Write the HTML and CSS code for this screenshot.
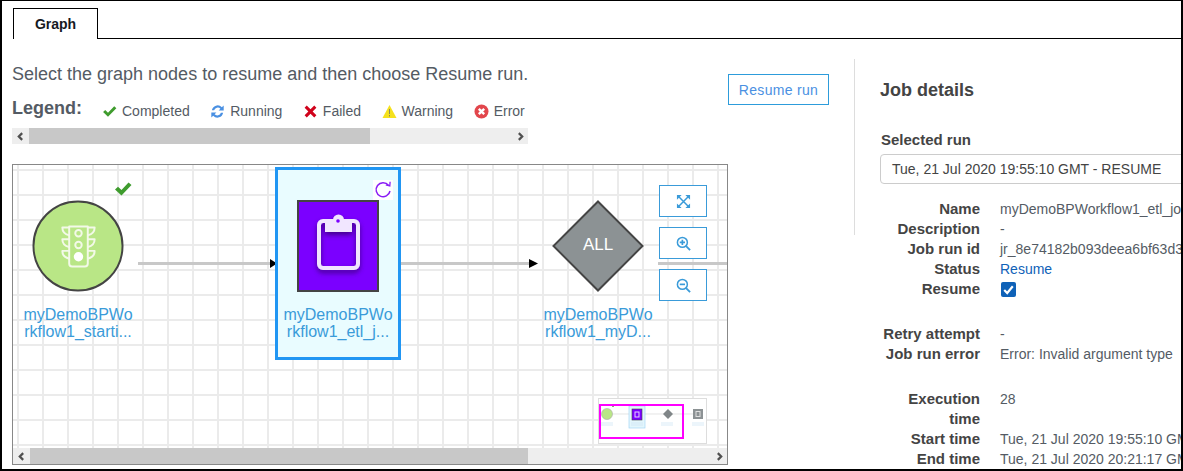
FILE: index.html
```html
<!DOCTYPE html>
<html lang="en">
<head>
<meta charset="utf-8">
<title>Graph</title>
<link rel="stylesheet" href="styles.css">
</head>
<body>
<div class="frame">
  <div class="tabs">
    <div class="tab">Graph</div>
    <div class="tab-rest"></div>
  </div>
  <div class="main">
    <section class="left">
      <div class="head">
        <div class="head-text">
          <p class="intro">Select the graph nodes to resume and then choose Resume run.</p>
          <div class="legend">
            <strong class="legend-title">Legend:</strong>
            <span class="legend-item">
              <svg class="legend-icon" viewBox="0 0 14 14"><path d="M1 7.500l2-2 2.600 2.600L11.400 2l2 2-7.800 8z" fill="#3f9c2e"/></svg>Completed</span>
            <span class="legend-item">
              <svg class="legend-icon" viewBox="0 0 16 16"><path d="M2 6.600A6.200 6.200 0 0 1 12.600 3.400L14.600 1.500V7H9.200l1.900-2A4 4 0 0 0 4.400 6.600z" fill="#4a90e2"/><path d="M14 9.400A6.200 6.200 0 0 1 3.400 12.600L1.400 14.500V9h5.400l-1.900 2a4 4 0 0 0 6.700-1.600z" fill="#4a90e2"/></svg>Running</span>
            <span class="legend-item">
              <svg class="legend-icon" viewBox="0 0 14 14"><path d="M1.500 3.500l2-2L7 5l3.500-3.500 2 2L9 7l3.500 3.500-2 2L7 9l-3.500 3.500-2-2L5 7z" fill="#d0021b"/></svg>Failed</span>
            <span class="legend-item">
              <svg class="legend-icon" viewBox="0 0 15 15"><path d="M7.500 1L14.500 14H.5z" fill="#f5e11d"/><path d="M7 5h1v5H7zM7 11h1v1.500H7z" fill="#8c8c5a"/></svg>Warning</span>
            <span class="legend-item">
              <svg class="legend-icon" viewBox="0 0 15 15"><circle cx="7.500" cy="7.500" r="7" fill="#e2464c"/><path d="M4.800 4.800l5.400 5.400M10.200 4.800l-5.400 5.400" stroke="#fff" stroke-width="2.400"/></svg>Error</span>
          </div>
          <div class="hscroll">
            <span class="hscroll-btn"><svg viewBox="0 0 8 8"><path d="M5.500 1L2.500 4l3 3" fill="none" stroke="#505050" stroke-width="2"/></svg></span>
            <span class="hscroll-track"><span class="hscroll-thumb thumb-legend"></span></span>
            <span class="hscroll-btn"><svg viewBox="0 0 8 8"><path d="M2.500 1l3 3-3 3" fill="none" stroke="#505050" stroke-width="2"/></svg></span>
          </div>
        </div>
        <button class="resume-btn" type="button">Resume run</button>
      </div>

      <div class="canvas">
        <div class="viewport">
          <svg class="edges" viewBox="0 0 714 283">
            <rect x="125" y="97" width="133" height="3" fill="#c8c8c8"/>
            <path d="M257 94l7 4.500-7 4.500z" fill="#000"/>
            <rect x="388" y="97" width="130" height="3" fill="#c8c8c8"/>
            <path d="M516 94l9 4.500-9 4.500z" fill="#000"/>
            <rect x="645" y="97" width="69" height="3" fill="#c8c8c8"/>
          </svg>

          <svg class="start-check" viewBox="0 0 18 16"><path d="M1 8.500l3-2.800 3.500 3.300L14.500 1.500 17.500 4 7.500 14.500z" fill="#3f9c2e"/></svg>
          <svg class="start-node" viewBox="0 0 94 94">
            <circle cx="47" cy="47" r="45.500" fill="#b9e686" stroke="#444" stroke-width="2"/>
            <g fill="none" stroke="#f3f9e8" stroke-width="2" stroke-linejoin="round">
              <path d="M38 27h19v38a3 3 0 0 1-3 3H41a3 3 0 0 1-3-3z"/>
              <path d="M38 28H31c0 5 3 7 7 8M57 28h7c0 5-3 7-7 8M38 40H31c0 5 3 7 7 8M57 40h7c0 5-3 7-7 8M38 52H31c0 5 3 7 7 8M57 52h7c0 5-3 7-7 8"/>
              <circle cx="47.500" cy="34" r="3.300"/>
              <circle cx="47.500" cy="46" r="3.300"/>
            </g>
            <circle cx="47.500" cy="58" r="4.800" fill="#fff"/>
          </svg>
          <a class="node-label label-start">myDemoBPWo<br>rkflow1_starti...</a>

          <div class="selected-node">
            <svg class="spin" viewBox="0 0 20 20"><rect width="20" height="20" fill="#fff"/><path d="M15.500 5.200A7 7 0 1 0 17 11" fill="none" stroke="#8a1cf5" stroke-width="1.500"/><path d="M12.800 4.800l4 1.200.3-4.200" fill="none" stroke="#8a1cf5" stroke-width="1.300"/></svg>
            <svg class="job-icon" viewBox="0 0 82 92">
              <defs><filter id="sh" x="-30%" y="-30%" width="160%" height="170%"><feDropShadow dx="0" dy="3" stdDeviation="2.500" flood-color="#3a0078" flood-opacity=".85"/></filter></defs>
              <rect x="1" y="1" width="80" height="90" fill="#7b00ff" stroke="#444" stroke-width="2"/>
              <g filter="url(#sh)">
                <rect x="22" y="21" width="39" height="47" rx="4" fill="none" stroke="#f1e6ff" stroke-width="4"/>
                <path d="M28 20h8a5.500 5.500 0 0 1 11 0h8v12H28z" fill="#f1e6ff"/>
              </g>
              <circle cx="41" cy="21" r="1.800" fill="#7b00ff"/>
            </svg>
            <a class="node-label label-job">myDemoBPWo<br>rkflow1_etl_j...</a>
          </div>

          <div class="all-node">
            <svg viewBox="0 0 94 94"><path d="M47 1.500L92.500 47 47 92.500 1.500 47z" fill="#8c9294" stroke="#444" stroke-width="2"/></svg>
            <span class="all-text">ALL</span>
          </div>
          <a class="node-label label-all">myDemoBPWo<br>rkflow1_myD...</a>

          <div class="controls">
            <button class="ctl" type="button" aria-label="Fit">
              <svg viewBox="0 0 16 16"><path d="M3 3l10 10M13 3L3 13" stroke="#3a9bd9" stroke-width="1.600"/><path d="M1 1h5L1 6zM15 1h-5l5 5zM1 15h5l-5-5zM15 15h-5l5-5z" fill="#3a9bd9"/></svg>
            </button>
            <button class="ctl" type="button" aria-label="Zoom in">
              <svg viewBox="0 0 16 16"><circle cx="6.800" cy="6.800" r="5.300" fill="none" stroke="#3a9bd9" stroke-width="1.600"/><path d="M10.800 10.800L15 15" stroke="#3a9bd9" stroke-width="2"/><path d="M4 6.800h5.600M6.800 4v5.600" stroke="#3a9bd9" stroke-width="1.800"/></svg>
            </button>
            <button class="ctl" type="button" aria-label="Zoom out">
              <svg viewBox="0 0 16 16"><circle cx="6.800" cy="6.800" r="5.300" fill="none" stroke="#3a9bd9" stroke-width="1.600"/><path d="M10.800 10.800L15 15" stroke="#3a9bd9" stroke-width="2"/><path d="M4 6.800h5.600" stroke="#3a9bd9" stroke-width="1.800"/></svg>
            </button>
          </div>

          <svg class="minimap" viewBox="0 0 109 46">
            <rect x=".5" y=".5" width="108" height="45" fill="#fff" stroke="#ddd"/>
            <path d="M10 16h85" stroke="#d8d8d8" stroke-width=".7"/>
            <circle cx="9" cy="16" r="5.500" fill="#b9e686" stroke="#aaa" stroke-width=".6"/>
            <rect x="14" y="7" width="2" height="2" fill="#7cc06a"/>
            <rect x="31" y="8" width="16" height="22" fill="#e3f6fc" stroke="#a5d8f5" stroke-width=".7"/>
            <rect x="34" y="11" width="10" height="11" fill="#7b00ff" stroke="#444" stroke-width=".6"/>
            <rect x="37" y="14" width="4" height="5" fill="none" stroke="#e8d8ff"/>
            <path d="M70 11l5 5-5 5-5-5z" fill="#808688"/>
            <rect x="95" y="11" width="10" height="10" fill="#8c9294"/>
            <rect x="98" y="13.500" width="4" height="5" fill="none" stroke="#e0e0e0"/>
            <path d="M3 25h12M3 27h12M33 25h12M33 27h12M63 25h12M63 27h12M94 25h12M94 27h12" stroke="#cfe6f5" stroke-width=".8"/>
            <rect x="2" y="7" width="83" height="33" fill="none" stroke="#f0f" stroke-width="2"/>
          </svg>
        </div>
        <div class="hscroll hscroll-canvas">
          <span class="hscroll-btn"><svg viewBox="0 0 8 8"><path d="M5.500 1L2.500 4l3 3" fill="none" stroke="#505050" stroke-width="2"/></svg></span>
          <span class="hscroll-track"><span class="hscroll-thumb thumb-canvas"></span></span>
          <span class="hscroll-btn"><svg viewBox="0 0 8 8"><path d="M2.500 1l3 3-3 3" fill="none" stroke="#505050" stroke-width="2"/></svg></span>
        </div>
      </div>
    </section>

    <div class="divider"></div>

    <aside class="details">
      <h2 class="details-title">Job details</h2>
      <div class="run-label">Selected run</div>
      <div class="run-select">Tue, 21 Jul 2020 19:55:10 GMT - RESUME</div>
      <dl class="props">
        <dt>Name</dt><dd>myDemoBPWorkflow1_etl_job</dd>
        <dt>Description</dt><dd>-</dd>
        <dt>Job run id</dt><dd>jr_8e74182b093deea6bf63d3f1a2c07d5e9</dd>
        <dt>Status</dt><dd class="status">Resume</dd>
        <dt>Resume</dt><dd class="check-cell"><span class="checkbox"><svg viewBox="0 0 14 14"><path d="M3 7.500l2.800 2.800L11 4" fill="none" stroke="#fff" stroke-width="2"/></svg></span></dd>
        <dt class="group">Retry attempt</dt><dd class="group">-</dd>
        <dt>Job run error</dt><dd>Error: Invalid argument type</dd>
        <dt class="group">Execution time</dt><dd class="group">28</dd>
        <dt>Start time</dt><dd>Tue, 21 Jul 2020 19:55:10 GMT</dd>
        <dt>End time</dt><dd>Tue, 21 Jul 2020 20:21:17 GMT</dd>
      </dl>
    </aside>
  </div>
</div>
</body>
</html>
```

FILE: styles.css
```css
* { box-sizing: border-box; }
html, body { margin: 0; padding: 0; background: #fff; }
body { font-family: "Liberation Sans", Arial, sans-serif; color: #545b64; }

.frame {
  width: 1183px;
  height: 471px;
  border: solid #000;
  border-width: 1px 2px 2px 2px;
  overflow: hidden;
  background: #fff;
}

/* tabs */
.tabs { display: flex; padding: 7px 0 0 11px; height: 38px; }
.tab {
  width: 85px;
  border: 1px solid #000;
  border-bottom: 0;
  font-size: 14px;
  font-weight: 700;
  color: #16191f;
  text-align: center;
  line-height: 31px;
  background: #fff;
}
.tab-rest { flex: 1; border-bottom: 1px solid #000; }

.main { display: flex; align-items: flex-start; }

/* left */
.left { width: 829px; padding: 25px 0 0 10px; flex: none; }
.head { display: flex; align-items: flex-start; }
.head-text { width: 516px; flex: none; }
.resume-btn {
  margin: 10px 0 0 200px;
  width: 101px;
  height: 31px;
  border: 1px solid #2d9cdb;
  background: #fff;
  color: #4a90e2;
  font: 14px "Liberation Sans", Arial, sans-serif;
  letter-spacing: .3px;
  padding: 0;
}
.intro { margin: 0; font-size: 18px; line-height: 20px; color: #545b64; white-space: nowrap; }
.legend { display: flex; align-items: flex-start; height: 30px; margin-top: 14px; overflow: hidden; white-space: nowrap; }
.legend-title { font-size: 18px; line-height: 20px; color: #545b64; width: 90px; flex: none; }
.legend-item { display: inline-flex; align-items: center; font-size: 14px; line-height: 18px; margin: 4px 20.500px 0 0; color: #545b64; }
.legend-icon { width: 15px; height: 15px; margin-right: 5px; flex: none; }

.hscroll { display: flex; height: 16px; background: #eee; }
.hscroll-btn { width: 16px; flex: none; display: flex; align-items: center; justify-content: center; }
.hscroll-btn svg { width: 9px; height: 9px; }
.hscroll-track { flex: 1; display: flex; }
.hscroll-thumb { background: #c8c8c8; display: block; }
.thumb-legend { width: 341px; margin-left: 1px; }
.thumb-canvas { width: 498px; margin-left: 1px; }

/* canvas */
.canvas {
  margin-top: 20px;
  width: 716px;
  height: 301px;
  border: 1px solid #888;
  display: flex;
  flex-direction: column;
}
.viewport {
  position: relative;
  flex: 1;
  overflow: hidden;
  background-color: #fff;
  background-image:
    linear-gradient(to right, #ebebeb 2px, transparent 2px),
    linear-gradient(to bottom, #ebebeb 2px, transparent 2px);
  background-size: 25px 25px;
  background-position: 4px 4px;
}
.edges { position: absolute; left: 0; top: 0; width: 714px; height: 283px; }
.start-check { position: absolute; left: 101px; top: 16px; width: 18px; height: 16px; }
.start-node { position: absolute; left: 19px; top: 35px; width: 92px; height: 92px; }
.node-label {
  position: absolute;
  width: 120px;
  font-size: 16px;
  line-height: 17px;
  color: #3a9bd9;
  text-align: center;
  white-space: nowrap;
}
.label-start { left: 5px; top: 141px; }
.label-all { left: 525px; top: 141px; }
.selected-node {
  position: absolute;
  left: 262px;
  top: 2px;
  width: 126px;
  height: 193px;
  border: 3px solid #2196f3;
  background: #e9fcff;
}
.label-job { left: 0; top: 136px; }
.spin { position: absolute; left: 95px; top: 10px; width: 20px; height: 20px; }
.job-icon { position: absolute; left: 19px; top: 30px; width: 82px; height: 92px; }
.all-node { position: absolute; left: 539px; top: 35px; width: 92px; height: 92px; }
.all-node svg { display: block; width: 92px; height: 92px; }
.all-text {
  position: absolute;
  left: 0; right: 0; top: 35px;
  text-align: center;
  color: #fff;
  font-size: 17px;
  line-height: 20px;
}
.controls { position: absolute; left: 646px; top: 20px; display: flex; flex-direction: column; gap: 10px; }
.ctl {
  width: 48px;
  height: 32px;
  border: 1px solid #3a9bd9;
  background: #fff;
  padding: 0;
  display: flex;
  align-items: center;
  justify-content: center;
}
.ctl svg { width: 15px; height: 15px; }
.minimap { position: absolute; left: 585px; top: 233px; width: 109px; height: 46px; }

/* right */
.divider { width: 1px; height: 176px; margin: 20px 0 0 23px; background: #ddd; flex: none; }
.details { flex: 1; min-width: 0; padding: 0 0 0 25px; }
.details-title { margin: 39px 0 0; font-size: 18px; line-height: 24px; color: #444; font-weight: 700; }
.run-label { margin: 29px 0 0 1px; font-size: 15px; line-height: 18px; font-weight: 700; color: #444; }
.run-select {
  margin-top: 5px;
  width: 340px;
  height: 30px;
  border: 1px solid #ccc;
  border-radius: 4px;
  padding-left: 11px;
  font-size: 14px;
  line-height: 28px;
  color: #444;
  white-space: nowrap;
}
.props {
  margin: 15px 0 0;
  display: grid;
  grid-template-columns: 100px 260px;
  column-gap: 20px;
  font-size: 14px;
  line-height: 20px;
}
.props dt { font-weight: 700; font-size: 15px; text-align: right; color: #444; }
.props dd { margin: 0; white-space: nowrap; color: #545b64; }
.props .group { margin-top: 25px; }
.props .status { color: #0f62b8; }
.check-cell { display: flex; align-items: center; }
.checkbox {
  display: flex;
  width: 15px;
  height: 15px;
  margin-left: 1px;
  border-radius: 2px;
  background: #0f62b8;
}
.checkbox svg { width: 15px; height: 15px; }
```
